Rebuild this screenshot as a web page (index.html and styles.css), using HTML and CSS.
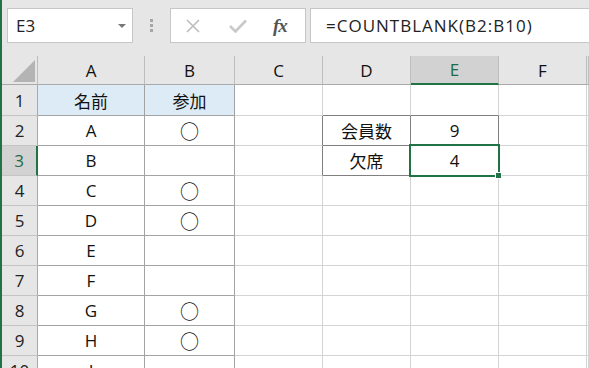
FILE: index.html
```html
<!DOCTYPE html>
<html lang="ja">
<head>
    <meta charset="UTF-8">
    <title>COUNTBLANK - Excel</title>
    <link rel="stylesheet" href="styles.css">
</head>
<body>
    <div class="app">
        <div class="formula-bar">
            <div class="name-box">
                <span>E3</span>
                <span class="caret"></span>
            </div>
            <div class="grip"><i></i><i></i><i></i></div>
            <div class="fx-box">
                <svg class="icon-x" width="16" height="14" viewBox="0 0 16 14">
                    <path d="M2 1 L14 13 M14 1 L2 13" stroke="#bdbdbd" stroke-width="1.6" fill="none"/>
                </svg>
                <svg class="icon-check" width="18" height="14" viewBox="0 0 18 14">
                    <path d="M1 7 L6.5 12.5 L17 1.5" stroke="#c9c9c9" stroke-width="2.6" fill="none"/>
                </svg>
                <span class="fx">fx</span>
            </div>
            <div class="formula-input">=COUNTBLANK(B2:B10)</div>
        </div>

        <div class="sheet">
            <div class="row head-row">
                <div class="cell corner"><span class="corner-tri"></span></div>
                <div class="cell col-head">A</div>
                <div class="cell col-head">B</div>
                <div class="cell col-head">C</div>
                <div class="cell col-head">D</div>
                <div class="cell col-head active">E</div>
                <div class="cell col-head">F</div>
                <div class="cell col-head"></div>
            </div>
            <div class="row first">
                <div class="cell row-head">1</div>
                <div class="cell tbl fill">名前</div>
                <div class="cell tbl fill">参加</div>
                <div class="cell"></div>
                <div class="cell box-top"></div>
                <div class="cell box-top"></div>
                <div class="cell"></div>
                <div class="cell"></div>
            </div>
            <div class="row">
                <div class="cell row-head">2</div>
                <div class="cell tbl">A</div>
                <div class="cell tbl mark">○</div>
                <div class="cell box-left"></div>
                <div class="cell box">会員数</div>
                <div class="cell box">9</div>
                <div class="cell"></div>
                <div class="cell"></div>
            </div>
            <div class="row">
                <div class="cell row-head active">3</div>
                <div class="cell tbl">B</div>
                <div class="cell tbl"></div>
                <div class="cell box-left"></div>
                <div class="cell box">欠席</div>
                <div class="cell box selected">4<span class="sel-frame"><span class="handle"></span></span></div>
                <div class="cell"></div>
                <div class="cell"></div>
            </div>
            <div class="row">
                <div class="cell row-head">4</div>
                <div class="cell tbl">C</div>
                <div class="cell tbl mark">○</div>
                <div class="cell"></div>
                <div class="cell"></div>
                <div class="cell"></div>
                <div class="cell"></div>
                <div class="cell"></div>
            </div>
            <div class="row">
                <div class="cell row-head">5</div>
                <div class="cell tbl">D</div>
                <div class="cell tbl mark">○</div>
                <div class="cell"></div>
                <div class="cell"></div>
                <div class="cell"></div>
                <div class="cell"></div>
                <div class="cell"></div>
            </div>
            <div class="row">
                <div class="cell row-head">6</div>
                <div class="cell tbl">E</div>
                <div class="cell tbl"></div>
                <div class="cell"></div>
                <div class="cell"></div>
                <div class="cell"></div>
                <div class="cell"></div>
                <div class="cell"></div>
            </div>
            <div class="row">
                <div class="cell row-head">7</div>
                <div class="cell tbl">F</div>
                <div class="cell tbl"></div>
                <div class="cell"></div>
                <div class="cell"></div>
                <div class="cell"></div>
                <div class="cell"></div>
                <div class="cell"></div>
            </div>
            <div class="row">
                <div class="cell row-head">8</div>
                <div class="cell tbl">G</div>
                <div class="cell tbl mark">○</div>
                <div class="cell"></div>
                <div class="cell"></div>
                <div class="cell"></div>
                <div class="cell"></div>
                <div class="cell"></div>
            </div>
            <div class="row">
                <div class="cell row-head">9</div>
                <div class="cell tbl">H</div>
                <div class="cell tbl mark">○</div>
                <div class="cell"></div>
                <div class="cell"></div>
                <div class="cell"></div>
                <div class="cell"></div>
                <div class="cell"></div>
            </div>
            <div class="row">
                <div class="cell row-head">10</div>
                <div class="cell tbl">I</div>
                <div class="cell tbl"></div>
                <div class="cell"></div>
                <div class="cell"></div>
                <div class="cell"></div>
                <div class="cell"></div>
                <div class="cell"></div>
            </div>
        </div>
    </div>
</body>
</html>
```

FILE: styles.css
```css
* {
    margin: 0;
    padding: 0;
    box-sizing: border-box;
}

html, body {
    height: 100%;
    overflow: hidden;
}

body {
    background: #e6e6e6;
    font-family: "Open Sans", "Noto Sans CJK JP", sans-serif;
    color: #111;
}

.app {
    height: 100%;
    border-left: 2px solid #217346;
    overflow: hidden;
}

/* formula bar */

.formula-bar {
    display: flex;
    align-items: flex-start;
    height: 56px;
    padding-top: 8px;
}

.name-box {
    display: flex;
    align-items: center;
    justify-content: space-between;
    width: 126px;
    height: 35px;
    margin-left: 5px;
    padding: 0 6px 0 8px;
    background: #fff;
    border: 1px solid #c6c6c6;
    font-size: 17px;
    color: #222;
}

.caret {
    width: 0;
    height: 0;
    border-left: 4px solid transparent;
    border-right: 4px solid transparent;
    border-top: 4px solid #777;
}

.grip {
    display: flex;
    flex-direction: column;
    gap: 2px;
    margin: 11px 0 0 17px;
}

.grip i {
    display: block;
    width: 3px;
    height: 3px;
    background: #a6a6a6;
}

.fx-box {
    display: flex;
    align-items: center;
    width: 136px;
    height: 35px;
    margin-left: 17px;
    background: #fff;
    border: 1px solid #c6c6c6;
}

.icon-x {
    margin-left: 14px;
}

.icon-check {
    margin-left: 28px;
}

.fx {
    margin-left: 26px;
    font-family: "Liberation Serif", serif;
    font-style: italic;
    font-weight: bold;
    font-size: 19px;
    color: #555;
    letter-spacing: -1px;
}

.formula-input {
    flex: 1;
    height: 35px;
    margin: 0 -10px 0 4px;
    padding-left: 15px;
    background: #fff;
    border: 1px solid #c6c6c6;
    font-size: 17px;
    line-height: 33px;
    letter-spacing: 1px;
    color: #222;
    white-space: nowrap;
}

/* sheet grid */

.row {
    display: grid;
    grid-template-columns: 36px 107px 90px 88px 88px 88px 88px 1fr;
    height: 30px;
}

.row.head-row {
    height: 29px;
}

.row.first {
    height: 31px;
}

.cell {
    display: flex;
    align-items: center;
    justify-content: center;
    background: #fff;
    border-right: 1px solid #d4d4d4;
    border-bottom: 1px solid #d4d4d4;
    font-size: 17px;
    white-space: nowrap;
    overflow: hidden;
}

.cell.mark {
    font-size: 19px;
}

.col-head {
    background: #e6e6e6;
    border-right-color: #bdbdbd;
    border-bottom-color: #a9a9a9;
    color: #111;
}

.col-head.active {
    background: #d2d2d2;
    color: #1e6b45;
    border-bottom: 2px solid #217346;
}

.corner {
    background: #e6e6e6;
    border-right-color: #bdbdbd;
    border-bottom-color: #a9a9a9;
    align-items: flex-end;
    justify-content: flex-end;
    padding: 0 2px 2px 0;
}

.corner-tri {
    width: 0;
    height: 0;
    border-left: 22px solid transparent;
    border-bottom: 22px solid #b4b4b4;
}

.row-head {
    background: #e6e6e6;
    border-right-color: #a9a9a9;
    border-bottom-color: #c4c4c4;
    color: #222;
}

.row-head.active {
    background: #d2d2d2;
    color: #1e6b45;
    border-right: 2px solid #217346;
}

.tbl {
    border-right-color: #a3a3a3;
    border-bottom-color: #a3a3a3;
}

.tbl.fill {
    background: #ddebf7;
}

.box {
    border-right-color: #7f7f7f;
    border-bottom-color: #7f7f7f;
}

.box-top {
    border-bottom-color: #7f7f7f;
}

.box-left {
    border-right-color: #7f7f7f;
}

.selected {
    position: relative;
    overflow: visible;
}

.sel-frame {
    position: absolute;
    left: -2px;
    top: -2px;
    width: 91px;
    height: 33px;
    border: 2px solid #217346;
}

.handle {
    position: absolute;
    right: -4px;
    bottom: -4px;
    width: 7px;
    height: 7px;
    background: #217346;
    border: 1px solid #fff;
}
```
